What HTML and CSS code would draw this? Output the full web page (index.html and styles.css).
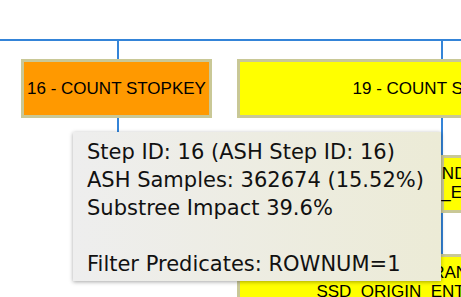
FILE: index.html
```html
<!DOCTYPE html>
<html lang="en">
<head>
    <meta charset="UTF-8">
    <title>Plan Tree</title>
    <link rel="stylesheet" href="styles.css">
</head>
<body>
    <div class="tree">
        <!-- connectors -->
        <div class="edge edge-h" style="left: 0; top: 39px; width: 461px;"></div>
        <div class="edge edge-v" style="left: 117px; top: 40px; height: 20px;"></div>
        <div class="edge edge-v" style="left: 117px; top: 117px; height: 20px;"></div>
        <div class="edge edge-v" style="left: 441px; top: 40px; height: 215px;"></div>

        <!-- nodes -->
        <div class="node node-hot" style="left: 21px; top: 59px; width: 191px; height: 59px;">16 - COUNT STOPKEY</div>
        <div class="node" style="left: 237px; top: 59px; width: 410px; height: 59px;">19 - COUNT STOPKEY</div>
        <div class="node node-2line" style="left: 441px; top: 155px; width: 133px; height: 58px;">27 - INDEX UNIQUE SCAN<br>SSD_ENTITY_TYPES_PK</div>
        <div class="node node-2line" style="left: 237px; top: 254px; width: 412px; height: 58px;">24 - INDEX RANGE SCAN<br>SSD_ORIGIN_ENTITY_FK_IDX1</div>

        <!-- hover tooltip -->
        <div class="tooltip">
            Step ID: 16 (ASH Step ID: 16)<br>
            ASH Samples: 362674 (15.52%)<br>
            Substree Impact 39.6%<br>
            <br>
            Filter Predicates: ROWNUM=1
        </div>
    </div>
</body>
</html>
```

FILE: styles.css
```css
body { margin: 0; background: #fff; }
.tree { position: relative; width: 461px; height: 297px; overflow: hidden; background: #fff; }
.edge { position: absolute; background: #3484d8; }
.edge-h { height: 2px; }
.edge-v { width: 2px; }
.node {
    position: absolute;
    box-sizing: border-box;
    display: flex;
    align-items: center;
    justify-content: center;
    text-align: center;
    white-space: nowrap;
    background: #ffff00;
    border: 3px solid #c9c896;
    font-family: "Liberation Sans", Arial, sans-serif;
    font-size: 17px;
    color: #000;
}
.node-hot { background: #ff9900; }
.node-2line { line-height: 19px; align-items: flex-start; padding-top: 6px; }
.tooltip {
    position: absolute;
    left: 73px;
    top: 132px;
    width: 368px;
    height: 149px;
    box-sizing: border-box;
    padding: 6px 14px 4px;
    background: linear-gradient(to right, #eeeeee, #ecebd6);
    box-shadow: 0 1px 4px rgba(0, 0, 0, 0.35);
    font-family: "DejaVu Sans", Verdana, sans-serif;
    font-size: 21px;
    line-height: 28px;
    color: #111;
    white-space: nowrap;
}
```
